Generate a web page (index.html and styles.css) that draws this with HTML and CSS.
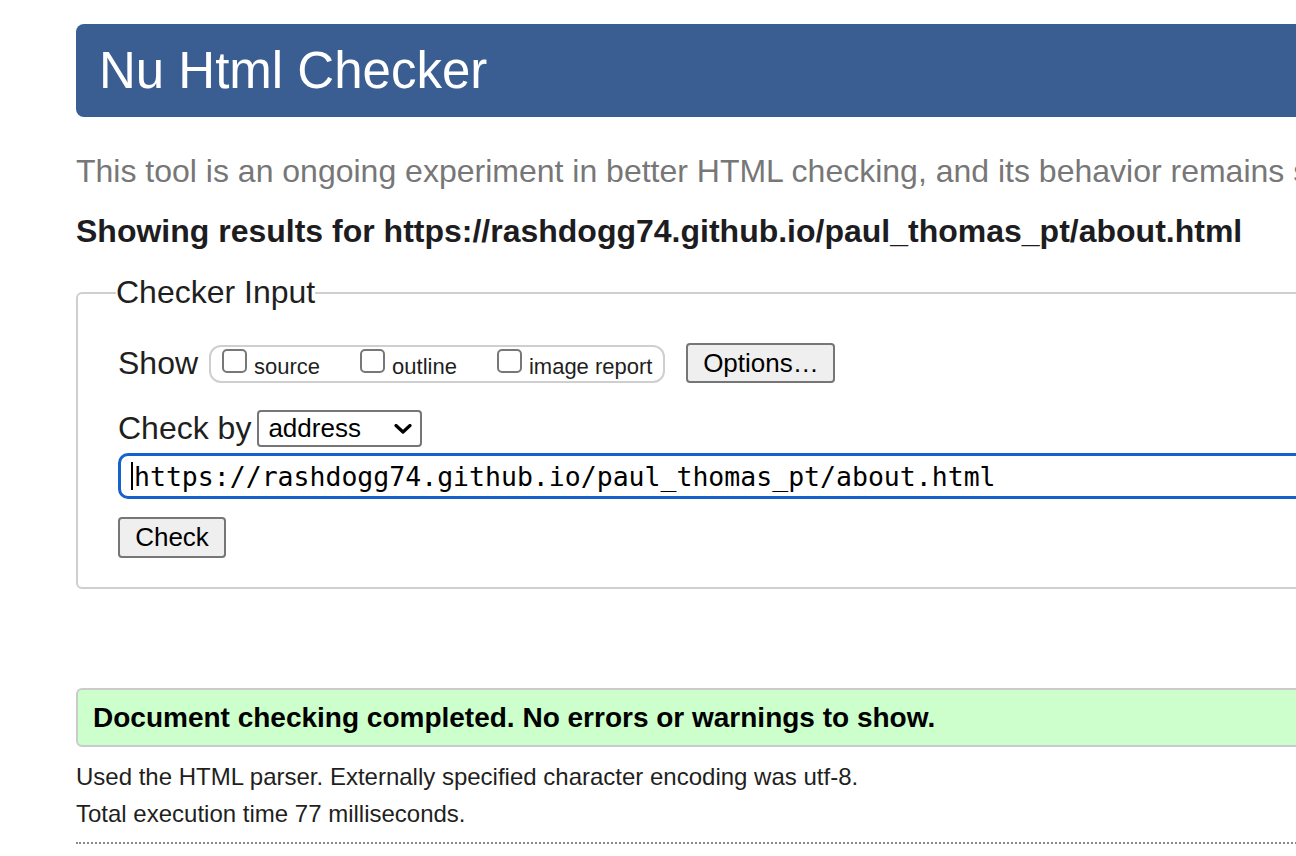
FILE: index.html
```html
<!DOCTYPE html>
<html lang="en">
<head>
<meta charset="utf-8">
<title>Nu Html Checker</title>
<link rel="stylesheet" href="styles.css">
</head>
<body>
<div class="page">
  <header class="banner"><h1 class="title">Nu Html Checker</h1></header>
  <p class="intro">This tool is an ongoing experiment in better HTML checking, and its behavior remains subject to change</p>
  <p class="showing">Showing results for https://rashdogg74.github.io/paul_thomas_pt/about.html</p>
  <fieldset class="input-box">
    <legend class="legend">Checker Input</legend>
    <div class="row row-show">
      <span class="label">Show</span>
      <div class="group">
        <label class="opt"><span class="box"></span><span>source</span></label>
        <label class="opt"><span class="box"></span><span>outline</span></label>
        <label class="opt"><span class="box"></span><span>image report</span></label>
      </div>
      <span class="btn btn-options">Options…</span>
    </div>
    <div class="row row-by">
      <span class="label">Check by</span>
      <span class="select"><span>address</span>
        <svg class="chev" width="18" height="10" viewBox="0 0 18 10"><path d="M2 1.5 L9 8 L16 1.5" fill="none" stroke="#000" stroke-width="3.2" stroke-linecap="round" stroke-linejoin="round"/></svg>
      </span>
    </div>
    <div class="url"><span class="caret"></span><span class="url-text">https://rashdogg74.github.io/paul_thomas_pt/about.html</span></div>
    <div class="row row-check"><span class="btn btn-check">Check</span></div>
  </fieldset>
  <div class="success">Document checking completed. No errors or warnings to show.</div>
  <p class="info info-1">Used the HTML parser. Externally specified character encoding was utf-8.</p>
  <p class="info info-2">Total execution time 77 milliseconds.</p>
  <hr class="dots">
</div>
</body>
</html>
```

FILE: styles.css
```css
html, body {
  margin: 0;
  padding: 0;
  background: #fff;
  overflow: hidden;
}
body {
  font-family: "Liberation Sans", Arial, sans-serif;
  color: #1f1f22;
}
.page {
  padding-left: 76px;
  width: 1500px;
}
.banner {
  margin-top: 24px;
  height: 93px;
  background: #3a5e91;
  border-radius: 8px;
  display: flex;
  align-items: center;
  padding-left: 23px;
}
.title {
  margin: 0;
  font-size: 51px;
  font-weight: normal;
  color: #fff;
  line-height: 1;
  white-space: nowrap;
}
.intro {
  margin: 36px 0 0 0;
  font-size: 32px;
  line-height: 37px;
  color: #777;
  white-space: nowrap;
}
.showing {
  margin: 23px 0 0 0;
  font-size: 32px;
  line-height: 37px;
  font-weight: bold;
  color: #1d1d21;
  white-space: nowrap;
}
.input-box {
  margin: 24px 0 0 0;
  border: 2px solid #cfcfcf;
  border-radius: 6px;
  padding: 0 0 29px 40px;
  min-width: 0;
}
.legend {
  margin-left: -2px;
  padding: 0;
  font-size: 32px;
  line-height: 37px;
  color: #1f1f22;
}
.row {
  display: flex;
  align-items: center;
}
.label {
  font-size: 32px;
  line-height: 37px;
  color: #1f1f22;
}
.row-show {
  margin-top: 32px;
  height: 40px;
}
.group {
  margin-left: 11px;
  height: 34px;
  border: 2px solid #cfcfcf;
  border-radius: 12px;
  display: flex;
  align-items: center;
  padding: 0 11px 0 11px;
  gap: 40px;
  margin-top: 2px;
}
.opt {
  display: flex;
  align-items: center;
  gap: 7px;
  font-size: 22px;
  line-height: 25px;
  color: #1f1f22;
  padding-top: 4px;
}
.box {
  width: 21px;
  height: 20px;
  border: 2px solid #777;
  border-radius: 5px;
  margin-bottom: 10px;
  background: #fff;
}
.btn {
  box-sizing: border-box;
  display: flex;
  align-items: center;
  justify-content: center;
  background: #efefef;
  border: 2px solid #767676;
  border-radius: 4px;
  font-size: 26px;
  color: #000;
}
.btn-options {
  margin-left: 21px;
  width: 149px;
  height: 40px;
}
.row-by {
  margin-top: 27px;
  height: 37px;
}
.select {
  box-sizing: border-box;
  margin-left: 6px;
  width: 165px;
  height: 37px;
  border: 2px solid #767676;
  border-radius: 4px;
  display: flex;
  align-items: center;
  justify-content: space-between;
  padding: 0 8px 0 9px;
  font-size: 26px;
  color: #000;
}
.chev {
  display: block;
}
.url {
  box-sizing: border-box;
  margin-top: 6px;
  height: 46px;
  border: 3px solid #1662cd;
  border-radius: 10px;
  display: flex;
  align-items: center;
  padding-left: 10px;
}
.caret {
  width: 2px;
  height: 28px;
  background: #000;
  margin-right: 1px;
}
.url-text {
  font-family: "DejaVu Sans Mono", monospace;
  font-size: 26.5px;
  color: #000;
  white-space: nowrap;
}
.row-check {
  margin-top: 18px;
}
.btn-check {
  width: 108px;
  height: 41px;
}
.success {
  box-sizing: border-box;
  margin-top: 99px;
  height: 59px;
  background: #ccffcc;
  border: 2px solid #cbcbcb;
  border-radius: 6px;
  display: flex;
  align-items: center;
  padding-left: 15px;
  font-size: 28px;
  font-weight: bold;
  color: #000;
  white-space: nowrap;
}
.info {
  font-size: 24px;
  line-height: 28px;
  color: #1f1f22;
  white-space: nowrap;
}
.info-1 {
  margin: 16px 0 0 0;
}
.info-2 {
  margin: 9px 0 0 0;
}
.dots {
  margin: 14px 0 0 0;
  border: 0;
  border-top: 2px dotted #8a8a8a;
  height: 0;
}
```
